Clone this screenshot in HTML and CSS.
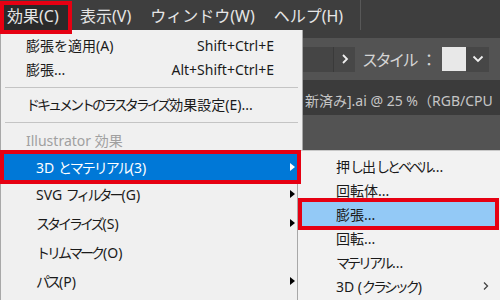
FILE: index.html
```html
<!DOCTYPE html>
<html lang="ja">
<head>
<meta charset="utf-8">
<link rel="stylesheet" href="styles.css">
</head>
<body>
<div class="app">
  <div class="menubar">
    <span class="mb-item active">効果(C)</span>
    <span class="mb-item">表示(V)</span>
    <span class="mb-item">ウィンドウ(W)</span>
    <span class="mb-item">ヘルプ(H)</span>
    <span class="mb-sep"></span>
  </div>
  <div class="workspace">
    <div class="ws-gap"></div>
    <div class="toolbar">
      <div class="tb-input"></div>
      <div class="tb-btn">
        <svg width="8" height="10" viewBox="0 0 8 10"><path d="M2 1 L6 5 L2 9" fill="none" stroke="#f0f0f0" stroke-width="1.8"/></svg>
      </div>
      <span class="tb-label"><span class="k">スタイル</span><span class="colon">：</span></span>
      <div class="tb-swatch"></div>
      <div class="tb-drop">
        <svg width="12" height="8" viewBox="0 0 12 8"><path d="M1.5 1.5 L6 6 L10.5 1.5" fill="none" stroke="#f0f0f0" stroke-width="1.8"/></svg>
      </div>
    </div>
    <div class="tabbar">
      <span class="tab-title">新済み].ai @ 25 %（RGB/CPU</span>
    </div>
    <div class="canvas"></div>
  </div>

  <div class="menu dropdown">
    <div class="item"><span class="label">膨張を適用(A)</span><span class="shortcut">Shift+Ctrl+E</span></div>
    <div class="item"><span class="label">膨張...</span><span class="shortcut">Alt+Shift+Ctrl+E</span></div>
    <div class="sep"></div>
    <div class="item"><span class="label"><span class="k">ドキュメントのラスタライズ</span>効果設定(E)...</span></div>
    <div class="sep sep2"></div>
    <div class="item header"><span class="label">Illustrator 効果</span></div>
    <div class="item tall sub hot first"><span class="label">3D <span class="k2">とマテリアル</span>(3)</span><span class="arrow"></span></div>
    <div class="item tall sub"><span class="label">SVG <span class="k">フィルター</span>(G)</span><span class="arrow"></span></div>
    <div class="item taller sub"><span class="label"><span class="k">スタイライズ</span>(S)</span><span class="arrow"></span></div>
    <div class="item taller sub"><span class="label"><span class="k">トリムマーク</span>(O)</span></div>
    <div class="item taller sub"><span class="label"><span class="k">パス</span>(P)</span><span class="arrow"></span></div>
  </div>

  <div class="menu submenu">
    <div class="sitem"><span>押<span class="k">し</span>出<span class="k">しとベベル</span>...</span></div>
    <div class="sitem">回転体...</div>
    <div class="sitem hot">膨張...</div>
    <div class="sitem">回転...</div>
    <div class="sitem"><span><span class="k">マテリアル</span>...</span></div>
    <div class="sitem"><span>3D (<span class="k">クラシック</span>)</span>
      <svg class="chev" width="6" height="10" viewBox="0 0 6 10"><path d="M1 1.5 L4.5 5 L1 8.5" fill="none" stroke="#444" stroke-width="1.3"/></svg>
    </div>
  </div>
</div>
</body>
</html>
```

FILE: styles.css
```css
* { box-sizing: border-box; }
html, body { margin: 0; padding: 0; }
body {
  width: 500px;
  height: 300px;
  overflow: hidden;
  font-family: "Noto Sans", "Noto Sans CJK JP", sans-serif;
  background: #535353;
}
.app {
  position: relative;
  width: 500px;
  height: 300px;
  overflow: hidden;
}
.k { letter-spacing: -3px; padding-right: 1px; }
.k2 { letter-spacing: -2px; }

/* menu bar */
.menubar {
  height: 30px;
  background: #3e3e3e;
  display: flex;
  align-items: flex-start;
  padding-left: 4px;
  color: #e6e6e6;
  font-size: 16px;
}
.mb-item {
  height: 25px;
  margin-top: 5px;
  line-height: 23px;
  padding: 0 4px 0 3px;
  margin-right: 12px;
  white-space: nowrap;
}
.mb-item.active {
  background: #2a2a2a;
  outline: 4px solid #e60012;
  position: relative;
  z-index: 3;
  width: 64px;
  margin-right: 9px;
}
.mb-sep {
  width: 1px;
  height: 30px;
  background: #585858;
  margin-left: 1px;
}

/* workspace */
.workspace { display: flex; flex-direction: column; height: 270px; }
.ws-gap { height: 8px; background: #3e3e3e; }
.toolbar {
  height: 42px;
  background: #535353;
  display: flex;
  align-items: center;
  justify-content: flex-end;
  padding-right: 11px;
}
.tb-input {
  width: 60px;
  height: 25px;
  background: #454545;
}
.tb-btn {
  width: 22px;
  height: 25px;
  background: #474747;
  border-left: 1px solid #3a3a3a;
  display: flex;
  align-items: center;
  justify-content: center;
  margin-right: 7px;
}
.tb-label {
  width: 80px;
  color: #d4d4d4;
  font-size: 16px;
  line-height: 25px;
  white-space: nowrap;
  font-family: "Noto Sans CJK JP", sans-serif;
}
.tb-label .k { letter-spacing: -2.5px; }
.colon { margin-left: 4px; }
.tb-swatch {
  width: 24px;
  height: 24px;
  background: #e8e8e8;
}
.tb-drop {
  width: 23px;
  height: 25px;
  background: #474747;
  display: flex;
  align-items: center;
  justify-content: center;
}
.tabbar {
  height: 35px;
  background: #3b3b3b;
  padding-top: 6px;
  padding-left: 305px;
  white-space: nowrap;
  overflow: hidden;
}
.tab-title {
  display: block;
  line-height: 29px;
  font-size: 14px;
  color: #c6c6c6;
}
.canvas { flex: 1; background: #535353; }

/* dropdown menus */
.menu {
  position: absolute;
  background: #f0f0f0;
  color: #1a1a1a;
  font-size: 14px;
}
.dropdown {
  left: 0;
  top: 30px;
  width: 303px;
  height: 270px;
  border-left: 1px solid #a8a8a8;
  border-right: 1px solid #a8a8a8;
  padding-top: 3px;
}
.item {
  display: flex;
  align-items: center;
  height: 24px;
  margin: 0 5px 0 3px;
  padding-left: 22px;
  padding-right: 2px;
  white-space: nowrap;
}
.item.sub { padding-left: 32px; }
.item.header { color: #a0a0a0; height: 24px; }
.item.tall { height: 28px; }
.item.taller { height: 29px; }
.item.first { height: 26px; margin-top: 2px; }
.shortcut { margin-left: auto; margin-right: 21px; }
.arrow {
  margin-left: auto;
  width: 0;
  height: 0;
  border-left: 5px solid #000;
  border-top: 4.5px solid transparent;
  border-bottom: 4.5px solid transparent;
}
.item.hot {
  background: #0078d7;
  color: #fff;
  outline: 4px solid #e60012;
  position: relative;
  z-index: 3;
}
.item.hot .arrow { border-left-color: #fff; }
.sep {
  height: 11px;
  padding-top: 6px;
  margin: 0 4px;
}
.sep::before {
  content: "";
  display: block;
  height: 1px;
  background: #c4c4c4;
}
.sep2 { height: 12px; }

.submenu {
  left: 297px;
  top: 150px;
  width: 206px;
  height: 150px;
  background: #f2f2f2;
  border-left: 1px solid #a8a8a8;
  border-top: 1px solid #c8c8c8;
  padding-top: 3px;
  z-index: 2;
}
.sitem {
  display: flex;
  align-items: center;
  height: 24px;
  margin: 0 8px 0 4px;
  padding-left: 34px;
  padding-right: 6px;
  white-space: nowrap;
}
.sitem.hot {
  background: #93c9f6;
  outline: 4px solid #e60012;
}
.chev { margin-left: auto; }
```
